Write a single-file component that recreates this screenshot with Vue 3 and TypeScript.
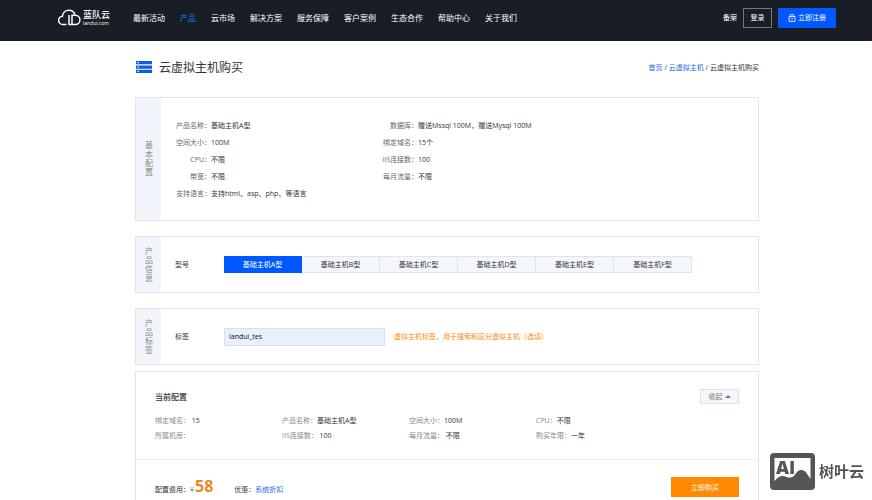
<script setup lang="ts">
import { ref } from 'vue'

interface Field {
  label: string
  value: string
}

const nav: string[] = ['最新活动', '产品', '云市场', '解决方案', '服务保障', '客户案例', '生态合作', '帮助中心', '关于我们']
const activeNav = '产品'

const leftFields: Field[] = [
  { label: '产品名称：', value: '基础主机A型' },
  { label: '空间大小：', value: '100M' },
  { label: 'CPU：', value: '不限' },
  { label: '带宽：', value: '不限' },
  { label: '支持语言：', value: '支持html、asp、php、等语言' },
]
const rightFields: Field[] = [
  { label: '数据库：', value: '赠送Mssql 100M，赠送Mysql 100M' },
  { label: '绑定域名：', value: '15个' },
  { label: 'IIS连接数：', value: '100' },
  { label: '每月流量：', value: '不限' },
]

const models: string[] = ['基础主机A型', '基础主机B型', '基础主机C型', '基础主机D型', '基础主机E型', '基础主机F型']
const model = ref(models[0])
const tag = ref('landui_tes')
const open = ref(true)

const summary: Field[] = [
  { label: '绑定域名：', value: '\u00a015' },
  { label: '产品名称：', value: '基础主机A型' },
  { label: '空间大小：', value: '100M' },
  { label: 'CPU：', value: '不限' },
  { label: '所属机房：', value: '' },
  { label: 'IIS连接数：', value: '\u00a0100' },
  { label: '每月流量：', value: '\u00a0不限' },
  { label: '购买年限：', value: '一年' },
]
</script>

<template>
  <div class="page">
    <header class="header">
      <a class="logo" href="#" aria-label="蓝队云">
        <svg class="logo-mark" viewBox="0 0 23 17" fill="none" stroke="#fff" stroke-width="1.5">
          <path d="M8.5 15.5H5.1A4.1 4.1 0 0 1 4.4 7.3C4.8 3.6 7.6 1.2 11 1.2c2.800 0 5 1.600 6 4.300" />
          <path d="M11 6v10" />
          <path d="M14 16V6.200h3.300a4.650 4.650 0 0 1 0 9.300H11" />
        </svg>
        <span class="logo-text">
          <span class="logo-name">蓝队云</span>
          <span class="logo-domain">landui.com</span>
        </span>
      </a>
      <nav class="nav">
        <a v-for="item in nav" :key="item" href="#" :class="{ active: item === activeNav }">{{ item }}</a>
      </nav>
      <div class="account">
        <a href="#">备案</a>
        <button type="button" class="login">登录</button>
        <button type="button" class="register">
          <svg viewBox="0 0 8 8" fill="none" stroke="#fff" stroke-width="0.8">
            <path d="M1 2.500h6v4.900H1zM2.300 2.500V.7h3.400v1.800M2.600 4.200 4 5.400l1.400-1.200" />
          </svg>
          立即注册
        </button>
      </div>
    </header>

    <main class="main">
      <div class="heading">
        <svg class="server" viewBox="0 0 16 12">
          <path fill="#0f5be8" d="M0 0h16v3.300H0zM0 4.400h16v3.300H0zM0 8.700h16V12H0z" />
          <path fill="#fff" d="M1.500 1h1.500v1.200H1.500zM1.500 5.400h1.500v1.200H1.500zM1.500 9.800h1.500V11H1.500z" />
        </svg>
        <h1>云虚拟主机购买</h1>
        <div class="crumbs">
          <a href="#">首页</a> / <a href="#">云虚拟主机</a> / <span>云虚拟主机购买</span>
        </div>
      </div>

      <section class="card">
        <h2 class="side">基本配置</h2>
        <div class="details">
          <dl v-for="(group, i) in [leftFields, rightFields]" :key="i">
            <div v-for="f in group" :key="f.label" class="detail">
              <dt>{{ f.label }}</dt>
              <dd>{{ f.value }}</dd>
            </div>
          </dl>
        </div>
      </section>

      <section class="card">
        <h2 class="side">产品信息</h2>
        <div class="row">
          <span class="row-label">型号</span>
          <div class="tabs">
            <button
              v-for="m in models"
              :key="m"
              type="button"
              :class="{ selected: m === model }"
              @click="model = m"
            >{{ m }}</button>
          </div>
        </div>
      </section>

      <section class="card">
        <h2 class="side">产品标签</h2>
        <div class="row">
          <label class="row-label" for="tag">标签</label>
          <input id="tag" v-model="tag" type="text" />
          <span class="hint">虚拟主机标签，用于搜索和区分虚拟主机（选填）</span>
        </div>
      </section>

      <section class="current">
        <div class="current-top">
          <div class="current-head">
            <h2>当前配置</h2>
            <button type="button" class="fold" @click="open = !open">
              收起
              <svg viewBox="0 0 6 3"><path fill="#777" d="M0 3 3 0l3 3z" /></svg>
            </button>
          </div>
          <dl v-show="open" class="summary">
            <div v-for="f in summary" :key="f.label">
              <dt>{{ f.label }}</dt>
              <dd>{{ f.value }}</dd>
            </div>
          </dl>
        </div>
        <div class="checkout">
          <div class="price">
            <span>配置费用：</span>
            <span class="yen">¥</span>
            <strong>58</strong>
            <span class="offer">优惠：<a href="#">系统折扣</a></span>
          </div>
          <button type="button" class="buy">立即购买</button>
        </div>
      </section>
    </main>

    <div class="watermark">
      <svg viewBox="0 0 45 37">
        <rect width="45" height="37" rx="4" fill="#555" />
        <path
          fill="#fff"
          d="M4.500 5h36v21c-1.500-2-2.500-4-4-6-2-3.500-7-4-9.500-1-2 2.500-3 5-6 5.500-4 .5-6-2-9.500-1.500-3 .5-4.500 2.500-7 5z"
        />
        <text x="6" y="20.500">AI</text>
      </svg>
      <span>树叶云</span>
    </div>
  </div>
</template>

<style>
html {
  scrollbar-width: none;
}
body {
  margin: 0;
  background: #fff;
}
</style>

<style scoped>
.page {
  font-family: "Open Sans", "Noto Sans CJK SC", sans-serif;
  font-size: 7px;
  line-height: 17px;
  color: #333;
}
h1,
h2,
dl,
dd {
  margin: 0;
  font-weight: 400;
}
a {
  color: #2468e0;
  text-decoration: none;
}
button,
input {
  box-sizing: border-box;
  margin: 0;
  padding: 0;
  border: 0;
  font: inherit;
  color: inherit;
}
button {
  cursor: pointer;
}

.header {
  display: flex;
  align-items: center;
  box-sizing: border-box;
  height: 41px;
  padding: 0 36px 6px 58px;
  background: #191d25;
  color: #fff;
}
.header a {
  color: #fff;
}
.logo {
  display: flex;
  align-items: center;
  gap: 2px;
  width: 75px;
}
.logo-mark {
  width: 23px;
  height: 17px;
}
.logo-text {
  display: flex;
  flex-direction: column;
}
.logo-name {
  font-size: 9px;
  font-weight: 500;
  line-height: 10px;
}
.logo-domain {
  font-size: 5px;
  line-height: 6px;
}
.nav {
  display: flex;
  flex: 1;
  gap: 15px;
  font-size: 8px;
  white-space: nowrap;
}
.header .nav .active {
  color: #1a7af5;
}
.account {
  display: flex;
  align-items: center;
  gap: 6px;
  white-space: nowrap;
}
.login {
  width: 29px;
  height: 20px;
  border: 1px solid #737780;
  background: transparent;
}
.register {
  display: flex;
  align-items: center;
  justify-content: center;
  gap: 2px;
  width: 58px;
  height: 20px;
  background: #0059ff;
}
.register svg {
  width: 8px;
  height: 8px;
}

.main {
  padding: 0 113px 0 135px;
}
.heading {
  display: flex;
  align-items: center;
  height: 52px;
  padding: 0 0 4px 1px;
}
.server {
  width: 16px;
  height: 12px;
}
.heading h1 {
  flex: 1;
  padding-left: 7px;
  font-size: 12px;
}

.card {
  display: flex;
  margin-bottom: 15px;
  border: 1px solid #e3e5e8;
}
.side {
  display: flex;
  align-items: center;
  justify-content: center;
  width: 25px;
  background: #f1f5fb;
  color: #888;
  font-size: 8px;
  line-height: 24px;
  letter-spacing: 1px;
  writing-mode: vertical-rl;
}
.details {
  display: grid;
  flex: 1;
  grid-template-columns: 207px 1fr;
  padding: 19px 0 18px;
}
.detail {
  display: flex;
}
.detail dt {
  width: 50px;
  color: #666;
  text-align: right;
}
.row {
  display: flex;
  flex: 1;
  align-items: center;
  min-height: 55px;
  padding-left: 14px;
}
.row-label {
  width: 49px;
}
.tabs {
  display: grid;
  flex: 0 1 468px;
  grid-template-columns: repeat(6, 1fr);
}
.tabs button {
  height: 17px;
  border: 1px solid #e0e4ea;
  border-left-width: 0;
  background: #f3f6fb;
  line-height: 14px;
}
.tabs .selected {
  border-color: #0059ff;
  background: #0059ff;
  color: #fff;
}
.row input {
  width: 161px;
  height: 18px;
  padding: 0 4px;
  border: 1px solid #dbe1ea;
  background: #e8f0fe;
  color: #111;
}
.hint {
  padding-left: 9px;
  color: #ff8a0d;
}

.current {
  margin-top: -9px;
  border: 1px solid #e3e5e8;
}
.current-top {
  padding: 16px 19px;
  border-bottom: 1px solid #eee;
}
.current-head {
  display: flex;
  align-items: center;
  justify-content: space-between;
}
.current-head h2 {
  font-size: 8px;
  font-weight: 500;
}
.fold {
  display: flex;
  align-items: center;
  justify-content: center;
  gap: 2px;
  width: 39px;
  height: 15px;
  border: 1px solid #dfe3e9;
  background: #f3f6fb;
  color: #777;
}
.fold svg {
  width: 6px;
  height: 3px;
}
.summary {
  display: grid;
  grid-template-columns: repeat(3, 127px) 1fr;
  padding-top: 8px;
  line-height: 15px;
}
.summary div {
  display: flex;
}
.summary dt {
  color: #888;
}
.checkout {
  display: flex;
  align-items: flex-end;
  justify-content: space-between;
  padding: 17px 19px;
}
.price {
  display: flex;
  align-items: baseline;
  line-height: 14px;
}
.yen {
  color: #666;
}
.price strong {
  padding-left: 1px;
  color: #f08519;
  font-size: 16px;
  font-weight: 700;
}
.offer {
  padding-left: 21px;
}
.buy {
  width: 68px;
  height: 20px;
  background: #ff8a00;
  color: #fff;
}

.watermark {
  position: fixed;
  right: 8px;
  bottom: 10px;
  display: flex;
  align-items: center;
  gap: 4px;
  color: #555;
  font-size: 15px;
  font-weight: 700;
}
.watermark svg {
  width: 45px;
  height: 37px;
}
.watermark text {
  fill: #555;
  font-size: 18px;
  font-weight: 800;
}
</style>
